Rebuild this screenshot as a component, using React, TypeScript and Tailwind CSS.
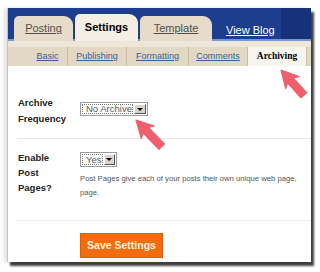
import React from 'react';

const Select = ({ text, w, h }: { text: string; w: string; h: string }) => (
  <div className={`flex items-center ${w} ${h} border border-[#9c9c9c] bg-white p-[1px]`}>
    <div className="flex flex-1 h-full items-center border border-dotted border-[#777] pl-[3px] text-[9.5px] leading-none text-[#5a5a5a]">
      {text}
    </div>
    <div className="ml-[1px] flex w-[12px] h-full items-center justify-center bg-[#d8d5cd] border border-t-white border-l-white border-r-[#555] border-b-[#555]">
      <div className="w-0 h-0 border-l-[3px] border-r-[3px] border-t-[3px] border-l-transparent border-r-transparent border-t-black" />
    </div>
  </div>
);

const Arrow = ({ x, y, angle, len }: { x: number; y: number; angle: number; len: number }) => (
  <g transform={`translate(${x} ${y}) rotate(${angle})`}>
    <polygon
      points={`0,0 17,-9 14,-3.8 ${len},-3.8 ${len},3.8 14,3.8 17,9`}
      fill="#ef5f6c"
      stroke="#ef5f6c"
      strokeWidth={1.2}
      strokeLinejoin="round"
    />
  </g>
);

export default function App() {
  const subTabs = [
    { label: 'Basic', w: 'w-[40px]' },
    { label: 'Publishing', w: 'w-[59px]' },
    { label: 'Formatting', w: 'w-[62px]' },
    { label: 'Comments', w: 'w-[59px]' },
  ];

  return (
    <div className="relative w-[320px] h-[272px] bg-white overflow-hidden font-['Liberation_Sans',Arial,sans-serif]">
      <div className="pt-[8px] pl-[7px]">
        <div className="flex flex-col w-[304px] h-[254px] bg-white border-l border-[#c4c4c4] shadow-[3px_4px_2px_rgba(0,0,0,0.75),-3px_0_4px_rgba(0,0,0,0.12)]">
          {/* Top tabs */}
          <div className="flex items-end h-[33px] pl-[6px] bg-[linear-gradient(to_right,#1d3e8c_0%,#1d3e8c_90%,#16327a_90%)] shadow-[inset_0_-2px_0_#7c97cc]">
            <div className="flex items-center justify-center w-[59px] h-[25px] rounded-tl-[5px] rounded-tr-[9px] bg-[#e6dcc9] text-[11px] text-[#505050] underline">
              Posting
            </div>
            <div className="ml-[2px] flex items-center justify-center w-[63px] h-[27px] rounded-tl-[5px] rounded-tr-[9px] bg-[#f4eee3] text-[11px] font-bold text-black">
              Settings
            </div>
            <div className="ml-[2px] flex items-center justify-center w-[72px] h-[25px] rounded-tl-[5px] rounded-tr-[9px] bg-[#e6dcc9] text-[11px] text-[#505050] underline">
              Template
            </div>
            <div className="ml-[14px] mb-[4px] text-[11px] leading-[13px] text-white underline">View Blog</div>
          </div>

          {/* Sub nav */}
          <div className="pt-[6px] bg-[#eee7d9]">
            <div className="flex h-[19px] pl-[20px] bg-[#e2d8c4]">
              {subTabs.map(t => (
                <div key={t.label} className={`flex items-center justify-center ${t.w} border-r border-[#c9bca6] text-[9px] text-[#3d5a9c] underline`}>
                  {t.label}
                </div>
              ))}
              <div className="flex items-center justify-center w-[59px] border-r border-[#c9bca6] bg-[#f8f5ee] font-['Liberation_Serif',serif] text-[9.5px] font-bold text-black">
                Archiving
              </div>
            </div>
          </div>

          {/* Settings */}
          <div className="pt-[29px]">
            <div className="flex pl-[10px]">
              <div className="w-[62px] text-[9.5px] leading-[16px] font-bold text-[#222]">
                Archive<br />Frequency
              </div>
              <div className="mt-[7px]">
                <Select text="No Archive" w="w-[68px]" h="h-[14px]" />
              </div>
            </div>
            <div className="mt-[11px] ml-[9px] border-t border-[#e6e6e6]" />

            <div className="flex pl-[10px] pt-[11px]">
              <div className="w-[62px] text-[9.5px] leading-[15px] font-bold text-[#222]">
                Enable<br />Post<br />Pages?
              </div>
              <div className="pt-[2px]">
                <Select text="Yes" w="w-[37px]" h="h-[15px]" />
                <div className="mt-[5px] text-[7.7px] leading-[14px] text-[#555] whitespace-nowrap">
                  Post Pages give each of your posts their own unique web page,<br />page.
                </div>
              </div>
            </div>
            <div className="mt-[20px] ml-[9px] border-t border-[#ececec]" />

            <button className="mt-[12px] ml-[72px] flex items-center justify-center w-[83px] h-[25px] bg-[#f36c10] border border-[#dd5c05] text-[10.5px] font-bold text-[#fff1dc]">
              Save Settings
            </button>
          </div>
        </div>
      </div>

      <svg className="absolute left-0 top-0 pointer-events-none" width={320} height={272}>
        <Arrow x={281} y={70} angle={48} len={34} />
        <Arrow x={136} y={120} angle={46} len={37} />
      </svg>
    </div>
  );
}
